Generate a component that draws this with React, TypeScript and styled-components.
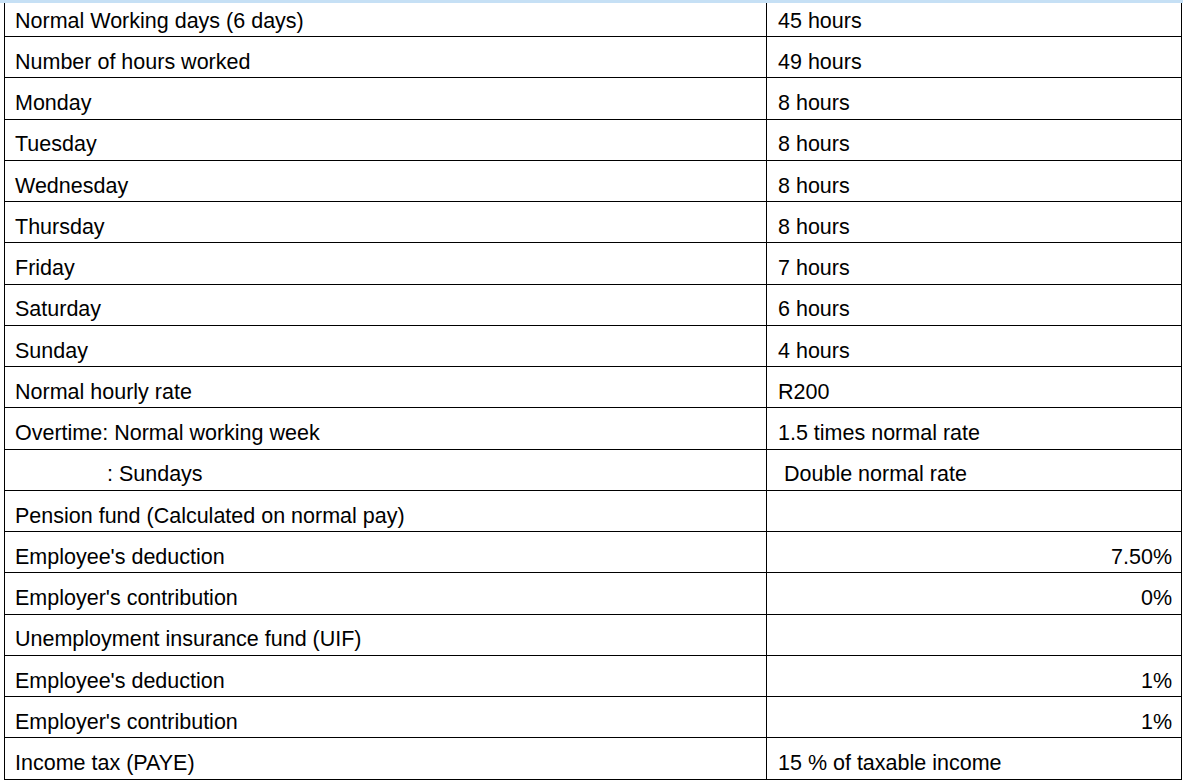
import React from "react";
import styled, { createGlobalStyle } from "styled-components";

const GlobalStyle = createGlobalStyle`
    html, body {
        margin: 0;
        padding: 0;
        background: #ffffff;
        overflow: hidden;
    }
    body {
        font-family: "Liberation Sans", Arial, sans-serif;
        color: #000000;
    }
`;

const Page = styled.div`
    width: 1183px;
    height: 781px;
    display: flex;
    flex-direction: column;
    overflow: hidden;
`;

const TopStrip = styled.div`
    height: 3px;
    flex: none;
    background: #c6e0f5;
`;

const Frame = styled.div`
    flex: 1;
    overflow: hidden;
    padding-left: 4px;
`;

const Sheet = styled.div`
    display: grid;
    grid-template-columns: 762px 415px;
    grid-auto-rows: 41.25px;
    margin-top: -8.25px;
    width: 1178px;
    border-left: 1px solid #000;
    border-top: 1px solid #000;
`;

type CellProps = {
    $align?: "left" | "right";
    $indent?: number;
    $side: "label" | "value";
};

const Cell = styled.div<CellProps>`
    box-sizing: border-box;
    display: flex;
    align-items: flex-end;
    justify-content: ${(p) => (p.$align === "right" ? "flex-end" : "flex-start")};
    border-right: 1px solid #000;
    border-bottom: 1px solid #000;
    padding: 0 9px 3.5px
        ${(p) => (p.$side === "value" ? 11 : 10) + (p.$indent || 0)}px;
    font-size: 21.5px;
    line-height: 24px;
    white-space: nowrap;
`;

type Row = {
    label: string;
    value?: string;
    labelIndent?: number;
    valueIndent?: number;
    right?: boolean;
};

const rows: Row[] = [
    { label: "Normal Working days (6 days)", value: "45 hours" },
    { label: "Number of hours worked", value: "49 hours" },
    { label: "Monday", value: "8 hours" },
    { label: "Tuesday", value: "8 hours" },
    { label: "Wednesday", value: "8 hours" },
    { label: "Thursday", value: "8 hours" },
    { label: "Friday", value: "7 hours" },
    { label: "Saturday", value: "6 hours" },
    { label: "Sunday", value: "4 hours" },
    { label: "Normal hourly rate", value: "R200" },
    { label: "Overtime: Normal working week", value: "1.5 times normal rate" },
    { label: ": Sundays", labelIndent: 92, value: "Double normal rate", valueIndent: 6 },
    { label: "Pension fund (Calculated on normal pay)" },
    { label: "Employee's deduction", value: "7.50%", right: true },
    { label: "Employer's contribution", value: "0%", right: true },
    { label: "Unemployment insurance fund (UIF)" },
    { label: "Employee's deduction", value: "1%", right: true },
    { label: "Employer's contribution", value: "1%", right: true },
    { label: "Income tax (PAYE)", value: "15 % of taxable income" },
];

const App = () => {
    return (
        <>
            <GlobalStyle />
            <Page>
                <TopStrip />
                <Frame>
                    <Sheet>
                        {rows.map((row, index) => (
                            <React.Fragment key={index}>
                                <Cell $side="label" $indent={row.labelIndent}>
                                    {row.label}
                                </Cell>
                                <Cell
                                    $side="value"
                                    $indent={row.valueIndent}
                                    $align={row.right ? "right" : "left"}
                                >
                                    {row.value}
                                </Cell>
                            </React.Fragment>
                        ))}
                    </Sheet>
                </Frame>
            </Page>
        </>
    );
};

export default App;
